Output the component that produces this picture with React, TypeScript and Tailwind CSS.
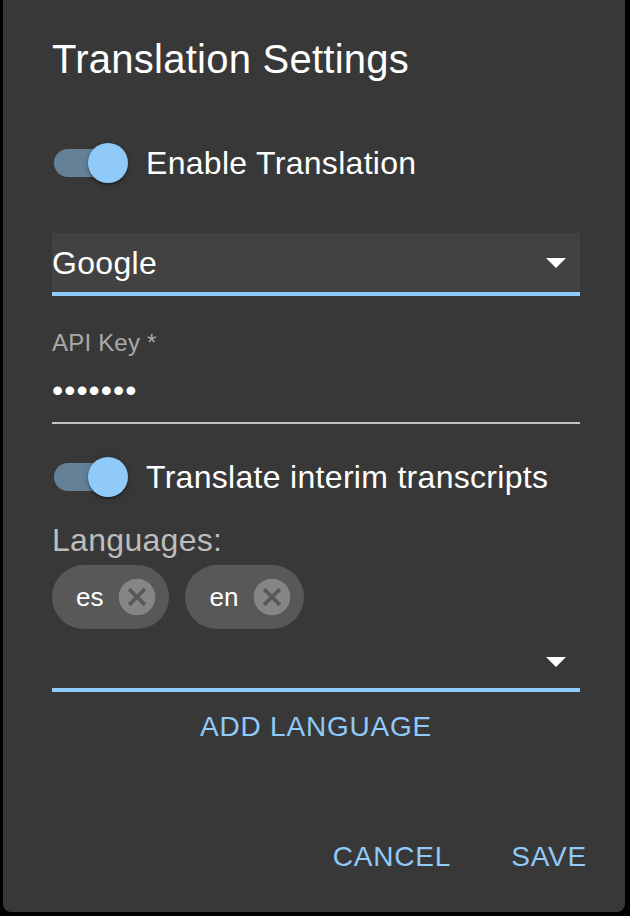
import React from 'react'

function Toggle() {
  return (
    <div className="relative w-[116px] h-[76px] shrink-0">
      <div className="absolute left-[24px] top-[24px] w-[68px] h-[28px] rounded-full bg-[#648198]" />
      <div className="absolute left-[58px] top-[18px] w-[40px] h-[40px] rounded-full bg-[#90caf9] shadow-[0_2px_2px_rgba(0,0,0,0.3),0_1px_6px_rgba(0,0,0,0.2)]" />
    </div>
  )
}

function DropArrow() {
  return (
    <svg width="20" height="10" viewBox="0 0 20 10" className="shrink-0">
      <polygon points="0,0 20,0 10,10" fill="#ffffff" />
    </svg>
  )
}

function Chip({ label }: { label: string }) {
  return (
    <div className="flex items-center h-[64px] rounded-full bg-[#585858]">
      <span className="pl-[24px] pr-[24px] text-[26px] leading-[32px] text-white">{label}</span>
      <svg width="44" height="44" viewBox="0 0 24 24" className="-ml-[12px] mr-[10px]">
        <path
          fill="#858585"
          d="M12 2C6.47 2 2 6.47 2 12s4.47 10 10 10 10-4.47 10-10S17.53 2 12 2zm5 13.59L15.59 17 12 13.41 8.41 17 7 15.59 10.59 12 7 8.41 8.41 7 12 10.59 15.59 7 17 8.41 13.41 12 17 15.59z"
        />
      </svg>
    </div>
  )
}

export default function App() {
  return (
    <div className="w-[630px] h-[916px] bg-black font-['Liberation_Sans',Arial,sans-serif]">
      <div className="ml-[3px] w-[622px] h-[912px] bg-[#383838] rounded-b-[8px] flex flex-col pl-[49px] pr-[45px] text-white">
        <h2 className="pt-[27px] text-[40px] leading-[64px] font-normal tracking-[0.25px]">Translation Settings</h2>

        <div className="mt-[34px] -ml-[22px] flex items-center">
          <Toggle />
          <span className="text-[32px] leading-[48px] tracking-[0.3px]">Enable Translation</span>
        </div>

        <div className="mt-[32px] h-[63px] flex items-center justify-between bg-[#424242] border-b-[4px] border-[#90caf9] pr-[14px]">
          <span className="text-[32px] leading-[40px] tracking-[0.3px]">Google</span>
          <DropArrow />
        </div>

        <div className="mt-[33px]">
          <div className="text-[24px] leading-[28px] text-[#a9a9a9] tracking-[0.2px]">API Key *</div>
          <div className="h-[65px] flex items-center text-[32px] leading-[40px] tracking-[1px]">•••••••</div>
          <div className="h-[2px] bg-[#c3c3c3]" />
        </div>

        <div className="mt-[15px] -ml-[22px] flex items-center">
          <Toggle />
          <span className="text-[32px] leading-[48px] tracking-[0.3px]">Translate interim transcripts</span>
        </div>

        <div className="mt-[5px] text-[32px] leading-[40px] text-[#bdbdbd] tracking-[0.3px]">Languages:</div>

        <div className="mt-[5px] flex gap-[16px]">
          <Chip label="es" />
          <Chip label="en" />
        </div>

        <div className="h-[63px] flex items-end justify-end pb-[21px] pr-[14px] border-b-[4px] border-[#90caf9]">
          <DropArrow />
        </div>

        <div className="mt-[17px] text-center text-[28px] leading-[36px] tracking-[0.8px] text-[#90caf9]">
          ADD LANGUAGE
        </div>

        <div className="mt-auto pb-[37px] -mr-[7px] flex justify-end gap-[60px] text-[28px] leading-[36px] tracking-[0.8px] text-[#90caf9]">
          <span>CANCEL</span>
          <span>SAVE</span>
        </div>
      </div>
    </div>
  )
}
